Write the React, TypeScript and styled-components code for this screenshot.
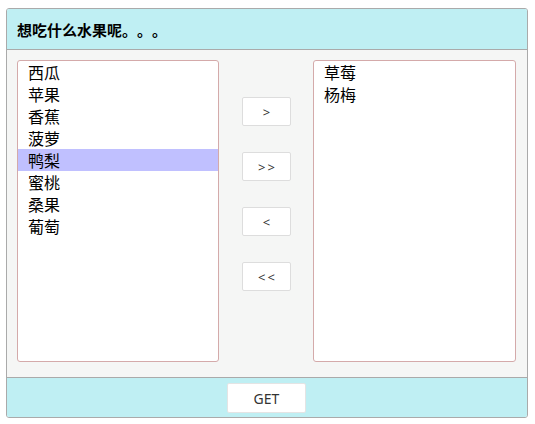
import React, { useState } from "react";
import styled, { createGlobalStyle } from "styled-components";

const Global = createGlobalStyle`
  html, body { margin: 0; padding: 0; background: #fff; }
  body { font-family: "Noto Sans CJK SC", "Noto Sans", sans-serif; color: #000; text-spacing-trim: space-all; }
`;

const Panel = styled.div`
  margin: 8px 8px 0 6px;
  width: 520px;
  border: 1px solid #aaa;
  border-radius: 3px;
  overflow: hidden;
  box-sizing: content-box;
`;

const Header = styled.div`
  height: 40px;
  background: #bfeff3;
  border-bottom: 1px solid #aaa;
  display: flex;
  align-items: center;
  padding-left: 10px;
  font-size: 15px;
  font-weight: bold;
  text-spacing-trim: space-all;
`;

const Body = styled.div`
  background: #f5f6f5;
  height: 327px;
  box-sizing: border-box;
  padding: 10px 11px 15px 10px;
  display: flex;
`;

const List = styled.div<{ $w: number }>`
  width: ${(p) => p.$w}px;
  height: 302px;
  box-sizing: border-box;
  background: #fff;
  border: 1px solid #d4aaaa;
  border-radius: 3px;
  overflow: hidden;
`;

const Item = styled.div<{ $sel?: boolean }>`
  height: 22px;
  line-height: 22px;
  padding-left: 10px;
  font-size: 16px;
  background: ${(p) => (p.$sel ? "#c0c0ff" : "transparent")};
  cursor: default;
`;

const Middle = styled.div`
  flex: 1;
  display: flex;
  flex-direction: column;
  align-items: center;
  padding-top: 37px;
  padding-left: 1px;
  gap: 26px;
`;

const Btn = styled.button`
  width: 49px;
  height: 29px;
  box-sizing: border-box;
  background: #fff;
  border: 1px solid #ddd;
  border-radius: 2px;
  font-family: "Noto Sans", sans-serif;
  font-size: 13px;
  letter-spacing: 2px;
  padding: 0 0 0 2px;
  color: #333;
  cursor: pointer;
`;

const Footer = styled.div`
  height: 40px;
  background: #bfeff3;
  border-top: 1px solid #aaa;
  box-sizing: border-box;
  padding: 5px 0 0 220px;
`;

const GetBtn = styled.button`
  width: 79px;
  height: 30px;
  background: #fff;
  border: 1px solid #e4e4e4;
  border-radius: 2px;
  font-family: "Noto Sans", sans-serif;
  font-size: 14px;
  color: #333;
  padding: 0;
  cursor: pointer;
`;

export default function App() {
  const [left] = useState(["西瓜", "苹果", "香蕉", "菠萝", "鸭梨", "蜜桃", "桑果", "葡萄"]);
  const [right] = useState(["草莓", "杨梅"]);
  const [sel] = useState("鸭梨");
  return (
    <>
      <Global />
      <Panel>
        <Header>想吃什么水果呢。。。</Header>
        <Body>
          <List $w={202}>
            {left.map((f) => (
              <Item key={f} $sel={f === sel}>{f}</Item>
            ))}
          </List>
          <Middle>
            <Btn>&gt;</Btn>
            <Btn>&gt;&gt;</Btn>
            <Btn>&lt;</Btn>
            <Btn>&lt;&lt;</Btn>
          </Middle>
          <List $w={203}>
            {right.map((f) => (
              <Item key={f}>{f}</Item>
            ))}
          </List>
        </Body>
        <Footer>
          <GetBtn>GET</GetBtn>
        </Footer>
      </Panel>
    </>
  );
}
